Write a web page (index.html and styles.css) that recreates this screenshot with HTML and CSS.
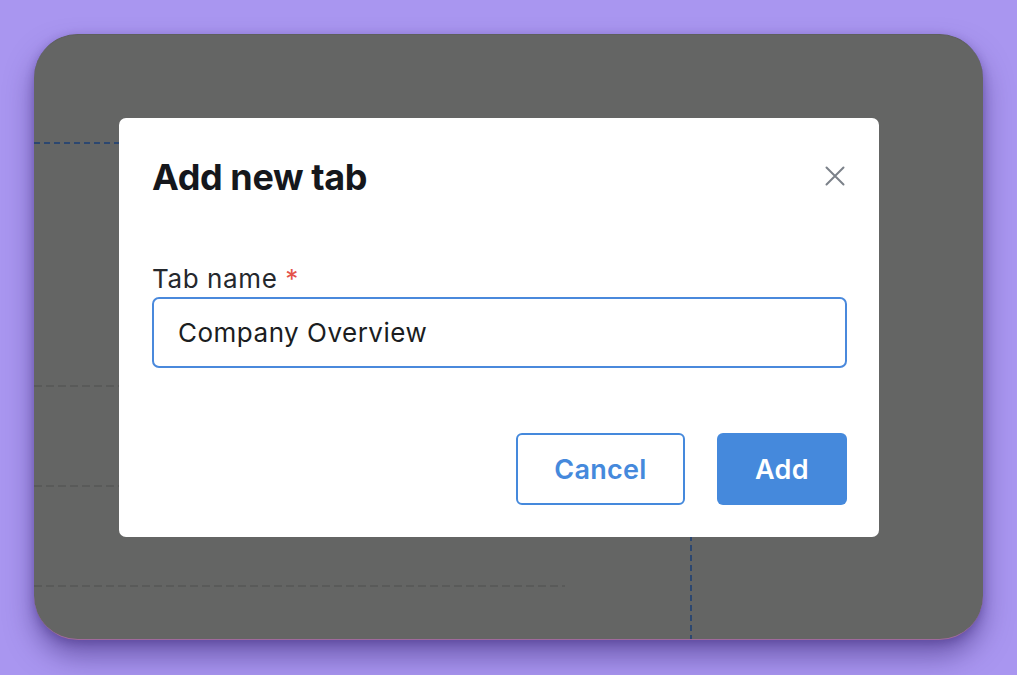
FILE: index.html
```html
<!DOCTYPE html>
<html lang="en">
<head>
<meta charset="utf-8">
<title>Add new tab</title>
<link rel="stylesheet" href="styles.css">
</head>
<body>
<div class="frame">
  <div class="underlay">
    <div class="guide guide-top"></div>
    <div class="guide guide-row r1"></div>
    <div class="guide guide-row r2"></div>
    <div class="guide guide-row r3"></div>
    <div class="guide-vert"></div>
  </div>
  <div class="modal" role="dialog" aria-labelledby="modal-title">
    <div class="modal-header">
      <h2 id="modal-title" class="modal-title">Add new tab</h2>
      <button class="close-btn" aria-label="Close">
        <svg width="20" height="20" viewBox="0 0 20 20" fill="none" stroke="#7b8189" stroke-width="2" stroke-linecap="round">
          <path d="M1.5 1.5 L18.5 18.5 M18.5 1.5 L1.5 18.5"/>
        </svg>
      </button>
    </div>
    <label class="field-label" for="tab-name">Tab name <span class="req">*</span></label>
    <div class="input" id="tab-name">Company Overview</div>
    <div class="actions">
      <button class="btn btn-outline">Cancel</button>
      <button class="btn btn-primary">Add</button>
    </div>
  </div>
</div>
</body>
</html>
```
FILE: styles.css
```css
* { box-sizing: border-box; }
html, body { margin: 0; padding: 0; }
body {
  background: #a996f0;
  font-family: Inter, "Noto Sans", "Liberation Sans", sans-serif;
  width: 1017px;
  height: 675px;
  overflow: hidden;
}
.frame {
  position: relative;
  margin: 34px 0 0 34px;
  width: 949px;
  height: 606px;
  background: #646564;
  border-radius: 44px;
  border-top: 1px solid #5e5f5e;
  border-bottom: 1px solid #a06a9c;
  box-shadow: 0 16px 28px rgba(50, 30, 110, 0.5), 0 3px 10px rgba(50, 30, 110, 0.3);
  overflow: hidden;
}
.underlay {
  position: absolute;
  inset: 0;
}
.guide {
  width: 531px;
  background-repeat: no-repeat;
  background-position: left bottom;
  background-size: 100% 2px;
}
.guide-top {
  width: 300px;
  height: 109px;
  background-image: repeating-linear-gradient(90deg, #2c4770 0 6px, transparent 6px 10px);
}
.guide-row {
  background-image: repeating-linear-gradient(90deg, #595a59 0 8px, transparent 8px 12px);
}
.r1 { height: 243px; }
.r2 { height: 100px; }
.r3 { height: 100px; }
.guide-vert {
  position: absolute;
  left: 656px;
  top: 300px;
  bottom: 0;
  width: 2px;
  background-image: repeating-linear-gradient(180deg, #2c4770 0 6px, transparent 6px 10px);
}
.modal {
  position: absolute;
  top: 83px;
  left: 85px;
  width: 760px;
  height: 419px;
  background: #ffffff;
  border-radius: 7px;
  padding: 39px 32px 32px 33px;
  display: flex;
  flex-direction: column;
}
.modal-header {
  display: flex;
  align-items: center;
  justify-content: space-between;
  height: 40px;
}
.modal-title {
  margin: 0;
  font-size: 36px;
  line-height: 40px;
  font-weight: 700;
  color: #15171c;
  letter-spacing: -0.4px;
}
.close-btn {
  background: none;
  border: 0;
  padding: 0;
  margin-right: 2px;
  margin-top: -2px;
  width: 20px;
  height: 20px;
  display: flex;
}
.field-label {
  margin-top: 66px;
  font-size: 26px;
  line-height: 32px;
  color: #25282d;
  letter-spacing: 0.6px;
}
.req { color: #e4524a; }
.input {
  margin-top: 2px;
  height: 71px;
  border: 2px solid #4a89dc;
  border-radius: 7px;
  padding: 0 24px;
  display: flex;
  align-items: center;
  font-size: 26px;
  letter-spacing: 0.5px;
  color: #1b1d21;
}
.actions {
  margin-top: 65px;
  display: flex;
  justify-content: flex-end;
  gap: 32px;
}
.btn {
  height: 72px;
  border-radius: 6px;
  font-family: inherit;
  font-size: 27px;
  font-weight: 600;
  letter-spacing: 0.3px;
  padding: 0;
}
.btn-outline {
  width: 169px;
  background: #fff;
  border: 2px solid #4589dc;
  color: #4589dc;
}
.btn-primary {
  width: 130px;
  background: #4589dc;
  border: 0;
  color: #fff;
}
```
